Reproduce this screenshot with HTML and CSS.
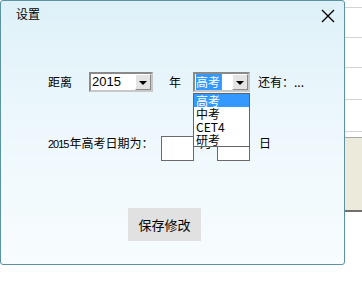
FILE: index.html
```html
<!DOCTYPE html>
<html lang="zh-CN">
<head>
  <meta charset="UTF-8" />
  <title>设置</title>
  <link rel="stylesheet" href="styles.css">
</head>
<body>
  <div class="dialog">
    <div class="titlebar">
      <span class="title">设置</span>
      <svg class="close" width="14" height="14" viewBox="0 0 14 14">
        <path d="M1 1 L13 13 M13 1 L1 13" stroke="#000" stroke-width="1.4" fill="none"/>
      </svg>
    </div>

    <div class="row row-top">
      <span class="label">距离</span>
      <div class="combo combo-year">
        <span class="combo-text">2015</span>
        <span class="combo-btn"><i class="arrow"></i></span>
      </div>
      <span class="label unit-year">年</span>
      <div class="combo combo-exam">
        <span class="combo-text"><span class="picked">高考</span></span>
        <span class="combo-btn"><i class="arrow"></i></span>
        <ul class="dropdown">
          <li class="active">高考</li>
          <li>中考</li>
          <li>CET4</li>
          <li>研考</li>
        </ul>
      </div>
      <span class="label remain">还有：...</span>
    </div>

    <div class="date-row">
      <span class="label"><span class="num">2015</span>年高考日期为：</span>
      <div class="box"></div>
      <span class="label unit-month">月</span>
      <div class="box"></div>
      <span class="label unit-day">日</span>
    </div>

    <div class="actions">
      <button class="save">保存修改</button>
    </div>
  </div>

  <div class="backdrop">
    <div class="line l1"></div>
    <div class="line l2"></div>
    <div class="line l2"></div>
    <div class="line l3"></div>
    <div class="line l3"></div>
    <div class="gap"></div>
    <div class="panel"></div>
  </div>
</body>
</html>
```

FILE: styles.css
```css
body {
  margin: 0;
  display: flex;
  background: #fff;
  font-family: "Noto Sans CJK SC", "DejaVu Sans", sans-serif;
  font-size: 12px;
  color: #000;
}

.dialog {
  width: 345px;
  height: 265px;
  box-sizing: border-box;
  border: 1px solid #5b93a3;
  border-radius: 3px;
  background: linear-gradient(180deg, #def1f8 0%, #eef8fc 50%, #f7fcfe 100%);
  display: flex;
  flex-direction: column;
  flex-shrink: 0;
}

.titlebar {
  height: 29px;
  display: flex;
  justify-content: space-between;
  align-items: flex-start;
  padding: 0 9px 0 15px;
}

.title {
  margin-top: 5px;
  font-size: 12px;
  line-height: 16px;
}

.close {
  margin-top: 8px;
}

.row {
  display: flex;
  align-items: center;
  padding-left: 47px;
}

.label {
  line-height: 16px;
  white-space: nowrap;
  flex-shrink: 0;
}

.row-top {
  margin-top: 42px;
  height: 20px;
}

.combo {
  position: relative;
  height: 20px;
  box-sizing: border-box;
  border: 2px solid #8a8a8a;
  border-right-color: #c8c8c8;
  border-bottom-color: #c8c8c8;
  background: #fff;
  display: flex;
  align-items: center;
  flex-shrink: 0;
}

.combo-year {
  width: 64px;
  margin-left: 17px;
}

.combo-exam {
  width: 57px;
  margin-left: 12px;
}

.combo-text {
  flex: 1;
  padding-left: 1px;
  font-family: "Liberation Sans", Arial, sans-serif;
  font-size: 13px;
  line-height: 16px;
}

.picked {
  display: inline-block;
  background: #3399ff;
  color: #fff;
  font-family: "Noto Sans CJK SC", sans-serif;
  font-size: 12px;
  line-height: 16px;
  padding-right: 1px;
  border-right: 1px solid #e0782a;
}

.combo-btn {
  width: 16px;
  height: 16px;
  box-sizing: border-box;
  border: 1px solid;
  border-color: #fff #8a8a8a #8a8a8a #fff;
  background: #e4e4e4;
  display: flex;
  align-items: center;
  justify-content: center;
}

.arrow {
  width: 0;
  height: 0;
  border-left: 4px solid transparent;
  border-right: 4px solid transparent;
  border-top: 4px solid #000;
  margin-top: 1px;
}

.unit-year {
  margin-left: 16px;
}

.remain {
  margin-left: 8px;
}

.dropdown {
  position: absolute;
  top: 19px;
  left: -2px;
  width: 57px;
  box-sizing: border-box;
  margin: 0;
  padding: 0;
  list-style: none;
  border: 1px solid #646464;
  background: #fff;
  z-index: 2;
}

.dropdown li {
  height: 13px;
  line-height: 13px;
  padding-left: 2px;
  font-size: 12px;
}

.dropdown li.active {
  background: #3399ff;
  color: #fff;
}

.date-row {
  display: grid;
  grid-template-columns: 113px 33px 23px 33px 40px;
  align-items: start;
  margin-top: 44px;
  padding-left: 47px;
  height: 25px;
}

.date-row .label {
  margin-top: -1px;
  overflow: visible;
}

.num {
  font-family: "Liberation Sans", Arial, sans-serif;
  font-size: 11px;
  letter-spacing: -1px;
  margin-right: 1px;
}

.box {
  height: 25px;
  box-sizing: border-box;
  border: 1px solid #6a6a6a;
  background: #fff;
}

.unit-month {
  padding-left: 6px;
}

.unit-day {
  padding-left: 9px;
}

.actions {
  margin-top: 47px;
  padding-left: 127px;
}

.save {
  width: 73px;
  height: 33px;
  border: none;
  background: #e1e1e1;
  font-family: "Noto Sans CJK SC", sans-serif;
  font-size: 13px;
  color: #000;
  padding: 0;
}

.backdrop {
  flex: 1;
  display: flex;
  flex-direction: column;
}

.line {
  border-bottom: 1px solid #d4d4d4;
}

.l1 { height: 7px; }
.l2 { height: 29px; }
.l3 { height: 31px; }

.gap {
  height: 5px;
  border-bottom: 1px solid #a8a8a8;
}

.panel {
  height: 72px;
  background: #ecebdb;
  border-bottom: 2px solid #707070;
}
```
